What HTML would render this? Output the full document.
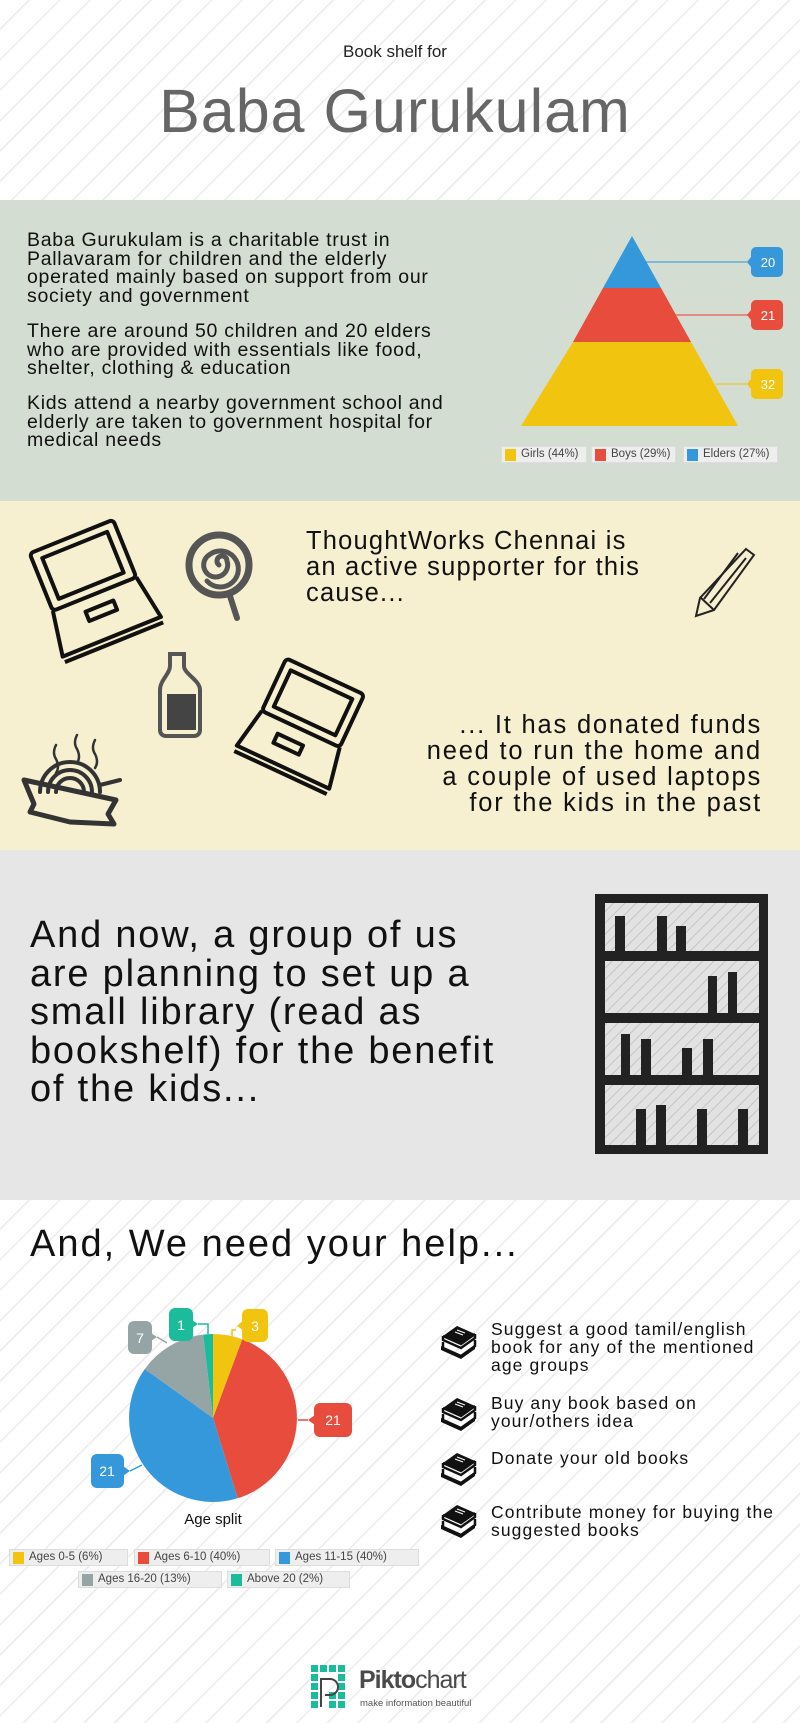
<!DOCTYPE html>
<html><head><meta charset="utf-8">
<style>
*{margin:0;padding:0;box-sizing:border-box}
body{width:800px;height:1723px;position:relative;font-family:"Liberation Sans",sans-serif;background:#fff;overflow:hidden}
.stripe{background:#fff repeating-linear-gradient(135deg,#fff 0,#fff 20px,#ebebeb 20px,#ebebeb 21.5px)}
.sec{position:absolute;left:0;width:800px}
.t{position:absolute;white-space:nowrap;color:#111}
.lg{position:absolute;height:17px;background:#eee;border:1px solid #ddd;font-size:11.5px;color:#444;line-height:15px;padding-left:19px}
.lg i{position:absolute;left:3px;top:2px;width:11px;height:12px}
</style></head><body>
<div class="sec stripe" style="top:0;height:200px"></div>
<div class="sec" style="top:200px;height:301px;background:#d4ddd1"></div>
<div class="sec" style="top:501px;height:349px;background:#f6efd0"></div>
<div class="sec" style="top:850px;height:350px;background:#e6e6e6"></div>
<div class="sec stripe" style="top:1200px;height:523px"></div>

<div class="t" style="left:0;width:790px;text-align:center;top:42px;font-size:17px;color:#222">Book shelf for</div>
<div class="t" style="left:0;width:790px;text-align:center;top:76px;font-size:61px;color:#666;letter-spacing:1px">Baba Gurukulam</div>

<div class="t" style="left:27px;top:231px;font-size:19.5px;line-height:18.5px;letter-spacing:0.7px">Baba Gurukulam is a charitable trust in<br>Pallavaram for children and the elderly<br>operated mainly based on support from our<br>society and government</div>
<div class="t" style="left:27px;top:322px;font-size:19.5px;line-height:18.5px;letter-spacing:0.7px">There are around 50 children and 20 elders<br>who are provided with essentials like food,<br>shelter, clothing &amp; education</div>
<div class="t" style="left:27px;top:394px;font-size:19.5px;line-height:18.5px;letter-spacing:0.7px">Kids attend a nearby government school and<br>elderly are taken to government hospital for<br>medical needs</div>

<div class="t" style="left:306px;top:528px;font-size:25.5px;line-height:26px;letter-spacing:1.2px">ThoughtWorks Chennai is<br>an active supporter for this<br>cause...</div>
<div class="t" style="right:38px;top:712px;font-size:25.5px;line-height:26px;text-align:right;letter-spacing:1.8px">... It has donated funds<br>need to run the home and<br>a couple of used laptops<br>for the kids in the past</div>

<div class="t" style="left:30px;top:916px;font-size:38px;line-height:38.5px;letter-spacing:1.8px">And now, a group of us<br>are planning to set up a<br>small library (read as<br>bookshelf) for the benefit<br>of the kids...</div>

<div class="t" style="left:30px;top:1223px;font-size:38px;letter-spacing:2px">And, We need your help...</div>
<div class="t" style="left:491px;top:1320px;font-size:17.5px;line-height:18px;letter-spacing:1.1px">Suggest a good tamil/english<br>book for any of the mentioned<br>age groups</div>
<div class="t" style="left:491px;top:1394px;font-size:17.5px;line-height:18px;letter-spacing:1.1px">Buy any book based on<br>your/others idea</div>
<div class="t" style="left:491px;top:1449px;font-size:17.5px;line-height:18px;letter-spacing:1.1px">Donate your old books</div>
<div class="t" style="left:491px;top:1503px;font-size:17.5px;line-height:18px;letter-spacing:1.1px">Contribute money for buying the<br>suggested books</div>
<div class="t" style="left:0;width:426px;text-align:center;top:1511px;font-size:15px">Age split</div>

<div class="lg" style="left:501px;top:446px;width:86px"><i style="background:#f1c40f"></i>Girls (44%)</div>
<div class="lg" style="left:591px;top:446px;width:85px"><i style="background:#e74c3c"></i>Boys (29%)</div>
<div class="lg" style="left:683px;top:446px;width:95px"><i style="background:#3498db"></i>Elders (27%)</div>

<div class="lg" style="left:9px;top:1549px;width:119px"><i style="background:#f1c40f"></i>Ages 0-5 (6%)</div>
<div class="lg" style="left:134px;top:1549px;width:136px"><i style="background:#e74c3c"></i>Ages 6-10 (40%)</div>
<div class="lg" style="left:275px;top:1549px;width:144px"><i style="background:#3498db"></i>Ages 11-15 (40%)</div>
<div class="lg" style="left:78px;top:1571px;width:144px"><i style="background:#95a5a6"></i>Ages 16-20 (13%)</div>
<div class="lg" style="left:227px;top:1571px;width:123px"><i style="background:#1abc9c"></i>Above 20 (2%)</div>

<svg width="800" height="1723" style="position:absolute;left:0;top:0" xmlns="http://www.w3.org/2000/svg">
<polygon points="632,236 661,288 603,288" fill="#3498db"/>
<polygon points="603,288 661,288 691,342 573,342" fill="#e74c3c"/>
<polygon points="573,342 691,342 738,426 521,426" fill="#f1c40f"/>
<line x1="646" y1="262" x2="752" y2="262" stroke="#3498db"/>
<line x1="676" y1="315" x2="752" y2="315" stroke="#e08a80" stroke-width="2"/>
<line x1="716" y1="384" x2="752" y2="384" stroke="#f1c40f"/>
<g font-family="Liberation Sans" font-size="13" fill="#fff" text-anchor="middle">
<path d="M756,247 h22 a5,5 0 0 1 5,5 v20 a5,5 0 0 1 -5,5 h-22 a5,5 0 0 1 -5,-5 v-5 l-4,-5 l4,-5 v-5 a5,5 0 0 1 5,-5z" fill="#3498db"/><text x="768" y="267">20</text>
<path d="M756,300 h22 a5,5 0 0 1 5,5 v20 a5,5 0 0 1 -5,5 h-22 a5,5 0 0 1 -5,-5 v-5 l-4,-5 l4,-5 v-5 a5,5 0 0 1 5,-5z" fill="#e74c3c"/><text x="768" y="320">21</text>
<path d="M756,369 h22 a5,5 0 0 1 5,5 v20 a5,5 0 0 1 -5,5 h-22 a5,5 0 0 1 -5,-5 v-5 l-4,-5 l4,-5 v-5 a5,5 0 0 1 5,-5z" fill="#f1c40f"/><text x="768" y="389">32</text>
</g>

<g fill="none" stroke="#111" stroke-width="4" stroke-linejoin="round">
 <g transform="rotate(-22 94 590)">
  <rect x="48" y="532" width="90" height="62" rx="4"/>
  <rect x="58" y="541" width="70" height="44"/>
  <path d="M48,594 L40,640 L146,640 L138,594"/>
  <rect x="78" y="607" width="30" height="10"/>
  <line x1="40" y1="646" x2="146" y2="646"/>
 </g>
 <g transform="rotate(25 305 720)">
  <rect x="262" y="672" width="86" height="58" rx="4"/>
  <rect x="271" y="681" width="68" height="40"/>
  <path d="M262,730 L254,772 L356,772 L348,730"/>
  <rect x="286" y="744" width="28" height="10"/>
  <line x1="254" y1="778" x2="356" y2="778"/>
 </g>
</g>
<g fill="none" stroke="#555" stroke-width="6" stroke-linecap="round">
 <circle cx="219" cy="565" r="30" stroke-width="7"/>
 <path d="M219,565 a5,5 0 1 1 8,-4 a12,12 0 1 1 -18,-6 a18,18 0 1 1 -2,26" stroke-width="5"/>
 <line x1="229" y1="593" x2="237" y2="618"/>
</g>
<g>
 <path d="M170,654 h14 v12 c0,8 16,14 16,24 v40 c0,4 -3,6 -6,6 h-28 c-3,0 -6,-2 -6,-6 v-40 c0,-10 10,-16 10,-24z" fill="none" stroke="#555" stroke-width="4"/>
 <path d="M167,694 h29 v36 h-29z" fill="#444"/>
</g>
<g fill="none" stroke="#222" stroke-width="2">
 <path d="M746,549 l8,6 l-40,55 l-18,6 l4,-18z"/>
 <line x1="704" y1="599" x2="738" y2="553"/><line x1="710" y1="603" x2="746" y2="558"/>
 <line x1="700" y1="597" x2="714" y2="610"/>
</g>
<g fill="none" stroke="#333" stroke-width="4" stroke-linecap="round">
 <path d="M24,780 l10,24 l-4,8 l40,10 l44,2 l-6,-10 l8,-14 z" stroke-width="5" stroke-linejoin="round"/>
 <path d="M40,792 a30,30 0 0 1 60,0 M48,792 a22,22 0 0 1 44,0 M56,792 a14,14 0 0 1 28,0"/>
 <line x1="100" y1="785" x2="120" y2="780"/>
 <path d="M56,745 q-4,8 0,14 q4,8 0,14 M77,735 q-4,8 0,14 q4,8 0,14 M95,740 q-4,8 0,14 q4,8 0,14" stroke-width="2.5"/>
</g>

<defs><pattern id="hs" width="8" height="8" patternUnits="userSpaceOnUse" patternTransform="rotate(45)"><rect width="8" height="8" fill="#e2e2e2"/><line x1="0" y1="0" x2="0" y2="8" stroke="#bbb" stroke-width="1.5"/></pattern></defs>
<rect x="595" y="894" width="173" height="260" fill="#222"/>
<rect x="605" y="903" width="154" height="48" fill="url(#hs)"/>
<rect x="605" y="961" width="154" height="52" fill="url(#hs)"/>
<rect x="605" y="1023" width="154" height="52" fill="url(#hs)"/>
<rect x="605" y="1085" width="154" height="60" fill="url(#hs)"/>
<g fill="#222">
 <rect x="615" y="916" width="10" height="35"/><rect x="657" y="916" width="10" height="35"/><rect x="676" y="926" width="10" height="25"/>
 <rect x="708" y="976" width="9" height="37"/><rect x="728" y="972" width="9" height="41"/>
 <rect x="621" y="1034" width="9" height="41"/><rect x="641" y="1039" width="10" height="36"/><rect x="682" y="1048" width="10" height="27"/><rect x="703" y="1039" width="10" height="36"/>
 <rect x="636" y="1109" width="10" height="36"/><rect x="656" y="1105" width="10" height="40"/><rect x="697" y="1109" width="10" height="36"/><rect x="738" y="1109" width="10" height="36"/>
</g>

<path d="M213,1418 L213,1334 A84,84 0 0 1 242.3,1339.3z" fill="#f1c40f"/>
<path d="M213,1418 L242.3,1339.3 A84,84 0 0 1 237.6,1498.3z" fill="#e74c3c"/>
<path d="M213,1418 L237.6,1498.3 A84,84 0 0 1 144.8,1369z" fill="#3498db"/>
<path d="M213,1418 L144.8,1369 A84,84 0 0 1 203.1,1334.6z" fill="#95a5a6"/>
<path d="M213,1418 L203.1,1334.6 A84,84 0 0 1 213,1334z" fill="#1abc9c"/>
<g font-family="Liberation Sans" font-size="14" fill="#fff" text-anchor="middle">
 <rect x="242" y="1309" width="26" height="33" rx="6" fill="#f1c40f"/><polygon points="243,1321 237,1326 243,1330" fill="#f1c40f"/><text x="255" y="1331">3</text>
 <rect x="169" y="1308" width="24" height="33" rx="6" fill="#1abc9c"/><polygon points="192,1320 198,1324 192,1328" fill="#1abc9c"/><text x="181" y="1330">1</text>
 <rect x="128" y="1321" width="24" height="33" rx="6" fill="#95a5a6"/><polygon points="151,1333 157,1337 151,1341" fill="#95a5a6"/><text x="140" y="1343">7</text>
 <rect x="314" y="1403" width="38" height="34" rx="6" fill="#e74c3c"/><polygon points="315,1415 308,1420 315,1425" fill="#e74c3c"/><text x="333" y="1425">21</text>
 <rect x="91" y="1454" width="33" height="34" rx="6" fill="#3498db"/><polygon points="123,1466 130,1471 123,1476" fill="#3498db"/><text x="107" y="1476">21</text>
</g>
<g stroke-width="1.5" fill="none">
 <path d="M236,1330 h-4 v8" stroke="#f1c40f"/><path d="M198,1324 h10 v10" stroke="#1abc9c"/><path d="M157,1337 l10,6" stroke="#95a5a6"/>
 <path d="M308,1420 h-10" stroke="#e74c3c"/><path d="M130,1471 l12,-6" stroke="#3498db"/>
</g>

<g id="bk" transform="translate(441,1324)">
 <path d="M2,12 L16,2 L34,10 L20,20 z" fill="#111"/>
 <path d="M2,12 L20,20 L34,10 M2,12 v4 l18,8 l14,-10 v-4" fill="none" stroke="#111" stroke-width="2.5"/>
 <path d="M2,18 v6 l18,8 l14,-10 v-6" fill="none" stroke="#111" stroke-width="2.5"/>
 <path d="M0,22 l20,9 l14,-10 v4 l-14,10 l-20,-9z" fill="#111"/>
 <line x1="14" y1="8" x2="22" y2="11" stroke="#fff" stroke-width="1"/><line x1="16" y1="6" x2="24" y2="9" stroke="#fff" stroke-width="1"/>
</g>
<use href="#bk" transform="translate(0,72)"/>
<use href="#bk" transform="translate(0,127)"/>
<use href="#bk" transform="translate(0,179)"/>

<g fill="#1abc9c">
 <rect x="311" y="1665" width="7" height="7"/><rect x="320" y="1665" width="7" height="7"/><rect x="329" y="1665" width="7" height="7"/><rect x="338" y="1665" width="7" height="7"/>
 <rect x="311" y="1674" width="7" height="7"/><rect x="338" y="1674" width="7" height="7"/>
 <rect x="311" y="1683" width="7" height="7"/><rect x="338" y="1683" width="7" height="7"/>
 <rect x="311" y="1692" width="7" height="7"/><rect x="329" y="1692" width="7" height="7"/><rect x="338" y="1692" width="7" height="7"/>
 <rect x="311" y="1701" width="7" height="7"/><rect x="329" y="1701" width="7" height="7"/><rect x="338" y="1701" width="7" height="7"/>
</g>
<path d="M321,1707 v-28 h9 a8,8 0 0 1 0,16 h-5" fill="none" stroke="#444" stroke-width="2"/>
<text x="359" y="1688" font-family="Liberation Sans" font-size="25" fill="#4a4a4a" font-weight="bold" letter-spacing="-1">Pikto<tspan font-weight="normal">chart</tspan></text>
<text x="360" y="1706" font-family="Liberation Sans" font-size="9.5" fill="#555">make information beautiful</text>
</svg>
</body></html>
